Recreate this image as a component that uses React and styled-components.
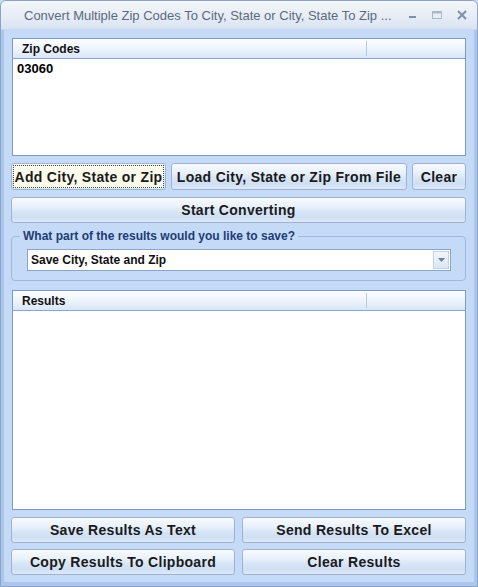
import React from "react";
import styled, { createGlobalStyle } from "styled-components";

const GlobalStyle = createGlobalStyle`
  html, body { margin: 0; padding: 0; }
  body { background: #c6dbf5; font-family: "Liberation Sans", Arial, sans-serif; }
  * { box-sizing: border-box; }
`;

const Window = styled.div`
  width: 478px;
  height: 587px;
  display: flex;
  flex-direction: column;
  background: #c4daf6;
  border: 1px solid #8ba3c4;
  border-radius: 6px 6px 0 0;
  overflow: hidden;
`;

const TitleBar = styled.div`
  height: 29px;
  flex: none;
  display: flex;
  align-items: center;
  padding: 0 9px 0 23px;
  background: linear-gradient(#f3f6fa, #e6ecf5 60%, #d8e3f2);
  border-bottom: 1px solid #c9d8ee;
`;

const Title = styled.div`
  flex: 1;
  font-size: 13px;
  color: #5c6a7e;
  white-space: nowrap;
  margin-top: 1px;
`;

const Controls = styled.div`
  display: flex;
  align-items: center;
  gap: 13px;
`;

const CtlIcon = styled.svg`
  width: 12px;
  height: 12px;
  display: block;
`;

const Frame = styled.div`
  flex: 1;
  display: flex;
  flex-direction: column;
  padding: 8px 8px 0 7px;
  border-left: 3px solid #aac6ec;
  border-right: 3px solid #aac6ec;
  border-bottom: 4px solid #aac6ec;
`;

const ListBox = styled.div`
  height: ${(p) => p.$h}px;
  margin: ${(p) => p.$mt ?? 0}px 0 0 1px;
  background: #ffffff;
  border: 1px solid #7d9ac2;
  display: flex;
  flex-direction: column;
  flex: none;
`;

const ListHeader = styled.div`
  height: 20px;
  display: flex;
  background: linear-gradient(#fdfeff, #eef4fc 50%, #d9e6f8);
  border-bottom: 1px solid #8aa6cf;
`;

const HeaderCell = styled.div`
  width: ${(p) => p.$w}px;
  padding-left: 9px;
  display: flex;
  align-items: center;
  font-weight: bold;
  font-size: 12px;
  color: #111;
  border-right: 1px solid #b6c8e2;
  margin: 2px 0;
`;

const ListItem = styled.div`
  padding: 2px 0 0 4px;
  font-weight: bold;
  font-size: 13px;
  color: #000;
`;

const Row = styled.div`
  display: flex;
  gap: ${(p) => p.$gap ?? 6}px;
  margin-top: ${(p) => p.$mt ?? 0}px;
  flex: none;
`;

const Button = styled.button`
  height: ${(p) => p.$h || 27}px;
  width: ${(p) => (p.$w ? `${p.$w}px` : "auto")};
  flex: ${(p) => (p.$w ? "none" : 1)};
  padding: 0;
  border: 1px solid #9eb3d1;
  border-radius: 3px;
  background: linear-gradient(#f7faff, #e9f1fb 35%, #d6e4f6 60%, #cfdff3 80%, #dde9f8);
  font-family: "Liberation Sans", Arial, sans-serif;
  font-weight: bold;
  font-size: 14px;
  letter-spacing: 0.3px;
  color: #1a1a1a;
  white-space: nowrap;
  position: relative;
  &:focus { outline: none; }
`;

const FocusRing = styled.span`
  position: absolute;
  inset: 1px;
  border: 1px dotted #444;
  background: #fbfbec;
  display: flex;
  align-items: center;
  justify-content: center;
`;

const Group = styled.div`
  position: relative;
  margin-top: 13px;
  height: 45px;
  padding: 12px 14px 0 15px;
  border: 1px solid #9fb9de;
  border-radius: 4px;
  flex: none;
`;

const Legend = styled.div`
  position: absolute;
  top: -8px;
  left: 8px;
  padding: 0 3px;
  background: #c4daf6;
  font-weight: bold;
  font-size: 12px;
  line-height: 14px;
  color: #1e3d74;
  white-space: nowrap;
`;

const Combo = styled.div`
  height: 22px;
  display: flex;
  background: #fff;
  border: 1px solid #8aa4c6;
`;

const ComboText = styled.div`
  flex: 1;
  display: flex;
  align-items: center;
  padding-left: 3px;
  font-weight: bold;
  font-size: 12px;
  color: #111;
`;

const ComboArrow = styled.div`
  width: 16px;
  margin: 1px;
  background: linear-gradient(#f2f6fc, #dce6f3);
  border: 1px solid #c4d2e6;
  display: flex;
  align-items: center;
  justify-content: center;
`;

export default function App() {
  return (
    <>
      <GlobalStyle />
      <Window>
        <TitleBar>
          <Title>Convert Multiple Zip Codes To City, State or City, State To Zip ...</Title>
          <Controls>
            <CtlIcon viewBox="0 0 12 12">
              <rect x="3" y="7" width="7" height="2" fill="#7e8fa8" />
            </CtlIcon>
            <CtlIcon viewBox="0 0 12 12">
              <rect x="1.5" y="2.5" width="9" height="7" fill="none" stroke="#aab8cc" />
              <rect x="1.5" y="2.5" width="9" height="2" fill="#aab8cc" />
            </CtlIcon>
            <CtlIcon viewBox="0 0 12 12">
              <path d="M2 2 L10 10 M10 2 L2 10" stroke="#7e8fa8" strokeWidth="2" />
            </CtlIcon>
          </Controls>
        </TitleBar>
        <Frame>
          <ListBox $h={118}>
            <ListHeader>
              <HeaderCell $w={354}>Zip Codes</HeaderCell>
            </ListHeader>
            <ListItem>03060</ListItem>
          </ListBox>
          <Row $mt={7} $gap={5}>
            <Button $w={155}>
              <FocusRing>Add City, State or Zip</FocusRing>
            </Button>
            <Button $w={236}>Load City, State or Zip From File</Button>
            <Button $w={54}>Clear</Button>
          </Row>
          <Row $mt={7}>
            <Button $h={26}>Start Converting</Button>
          </Row>
          <Group>
            <Legend>What part of the results would you like to save?</Legend>
            <Combo>
              <ComboText>Save City, State and Zip</ComboText>
              <ComboArrow>
                <svg width="7" height="4" viewBox="0 0 7 4">
                  <path d="M0 0 H7 L3.5 4 Z" fill="#6f7f96" />
                </svg>
              </ComboArrow>
            </Combo>
          </Group>
          <ListBox $h={220} $mt={9}>
            <ListHeader>
              <HeaderCell $w={354}>Results</HeaderCell>
            </ListHeader>
          </ListBox>
          <Row $mt={7} $gap={7}>
            <Button $h={26}>Save Results As Text</Button>
            <Button $h={26}>Send Results To Excel</Button>
          </Row>
          <Row $mt={6} $gap={7}>
            <Button $h={26}>Copy Results To Clipboard</Button>
            <Button $h={26}>Clear Results</Button>
          </Row>
        </Frame>
      </Window>
    </>
  );
}
